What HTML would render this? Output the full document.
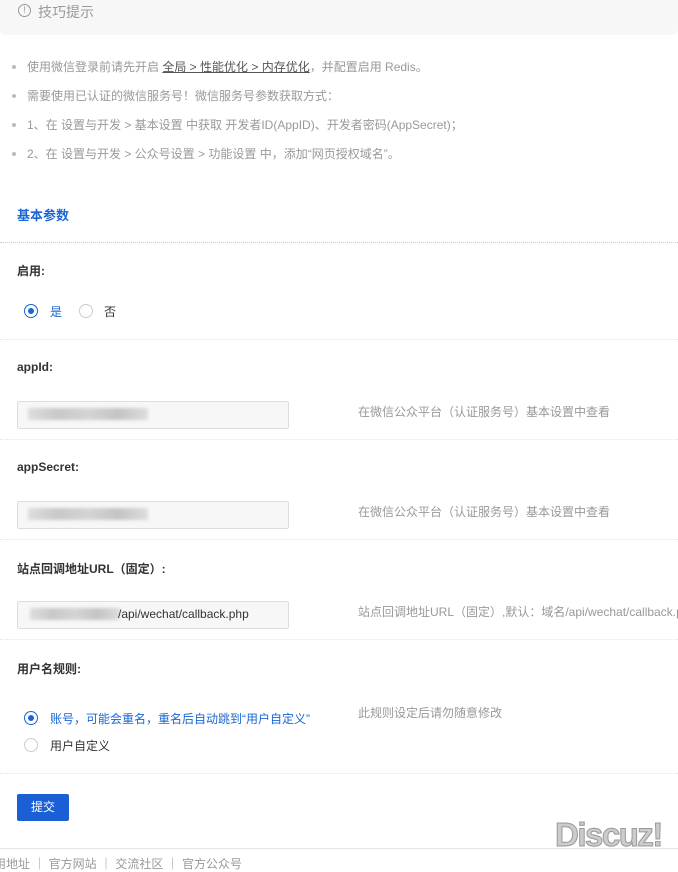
<!DOCTYPE html>
<html><head><meta charset="utf-8"><style>
body{margin:0;width:678px;height:862px;overflow:hidden;background:#fff;font-family:"Liberation Sans","Noto Sans CJK SC",sans-serif;position:relative}
.a{position:absolute;white-space:nowrap}
.tip{position:absolute;left:0;top:0;width:678px;height:35px;background:#f7f7f7;border-radius:0 0 6px 6px}
.li{font-size:12px;color:#999;left:27px}
.li:before{content:"";position:absolute;left:-15px;top:7px;width:4px;height:4px;border-radius:50%;background:#bbb}
.hr{position:absolute;left:0;width:678px;border-top:1px dotted #e4e4e4}
.lab{font-size:12px;font-weight:bold;color:#333;left:17px}
.inp{position:absolute;left:17px;width:270px;height:26px;border:1px solid #ddd;border-radius:2px;background:#f7f7f7}
.blur{position:absolute;left:10px;top:6px;height:12px;background:linear-gradient(90deg,#ddd,#c8c8c8,#d4d4d4,#c4c4c4,#ddd);filter:blur(1.5px)}
.desc{font-size:12px;color:#999;left:358px}
.r{position:absolute;width:12px;height:12px;border:1px solid #ccc;border-radius:50%;background:#fff}
.r.on{border-color:#1a66d6}
.r.on:after{content:"";position:absolute;left:3px;top:3px;width:6px;height:6px;border-radius:50%;background:#1a66d6}
</style></head><body>
<div class="tip"></div>
<div class="a" style="left:18px;top:4px;width:11px;height:11px;border:1px solid #999;border-radius:50%;font-size:9px;color:#999;text-align:center;line-height:11px">!</div>
<div class="a" style="left:38px;top:2px;font-size:14px;color:#999">技巧提示</div>
<div class="a li" style="top:58px">使用微信登录前请先开启 <span style="color:#555;text-decoration:underline">全局 &gt; 性能优化 &gt; 内存优化</span>，并配置启用 Redis。</div>
<div class="a li" style="top:87px">需要使用已认证的微信服务号！微信服务号参数获取方式：</div>
<div class="a li" style="top:116px">1、在 设置与开发 &gt; 基本设置 中获取 开发者ID(AppID)、开发者密码(AppSecret)；</div>
<div class="a li" style="top:145px">2、在 设置与开发 &gt; 公众号设置 &gt; 功能设置 中，添加“网页授权域名”。</div>
<div class="a" style="left:17px;top:205px;font-size:13px;font-weight:bold;color:#1a66d6">基本参数</div>
<div class="hr" style="top:242px;border-color:#ccc"></div>
<div class="a lab" style="top:262px">启用:</div>
<div class="r on" style="left:24px;top:304px"></div><div class="a" style="left:50px;top:303px;font-size:12px;color:#1a66d6">是</div>
<div class="r" style="left:79px;top:304px"></div><div class="a" style="left:104px;top:303px;font-size:12px;color:#333">否</div>
<div class="hr" style="top:339px"></div>
<div class="a lab" style="top:360px">appId:</div>
<div class="inp" style="top:401px"><div class="blur" style="width:120px"></div></div>
<div class="a desc" style="top:403px">在微信公众平台（认证服务号）基本设置中查看</div>
<div class="hr" style="top:439px"></div>
<div class="a lab" style="top:460px">appSecret:</div>
<div class="inp" style="top:501px"><div class="blur" style="width:120px"></div></div>
<div class="a desc" style="top:503px">在微信公众平台（认证服务号）基本设置中查看</div>
<div class="hr" style="top:539px"></div>
<div class="a lab" style="top:560px">站点回调地址URL（固定）:</div>
<div class="inp" style="top:601px"><div class="blur" style="width:90px;left:12px"></div><div class="a" style="left:100px;top:5px;font-size:12px;color:#333">/api/wechat/callback.php</div></div>
<div class="a desc" style="top:603px">站点回调地址URL（固定）,默认：域名/api/wechat/callback.php</div>
<div class="hr" style="top:639px"></div>
<div class="a lab" style="top:660px">用户名规则:</div>
<div class="r on" style="left:24px;top:711px"></div><div class="a" style="left:50px;top:710px;font-size:12px;color:#1a66d6">账号，可能会重名，重名后自动跳到“用户自定义”</div>
<div class="r" style="left:24px;top:738px"></div><div class="a" style="left:50px;top:737px;font-size:12px;color:#333">用户自定义</div>
<div class="a desc" style="top:704px">此规则设定后请勿随意修改</div>
<div class="hr" style="top:773px"></div>
<div class="a" style="left:17px;top:794px;width:52px;height:27px;background:#1a5fd6;border-radius:2px;color:#fff;font-size:12px;text-align:center;line-height:27px">提交</div>
<div class="hr" style="top:848px;border-top:1px solid #e5e5e5"></div>
<div class="a" style="left:-6px;top:855px;font-size:12px;color:#999">用地址 ｜ 官方网站 ｜ 交流社区 ｜ 官方公众号</div>
<div class="a" style="left:555px;top:816px;font-size:33px;font-weight:bold;color:#ccc;-webkit-text-stroke:1px #999;letter-spacing:-1.5px">Discuz!</div>
</body></html>
